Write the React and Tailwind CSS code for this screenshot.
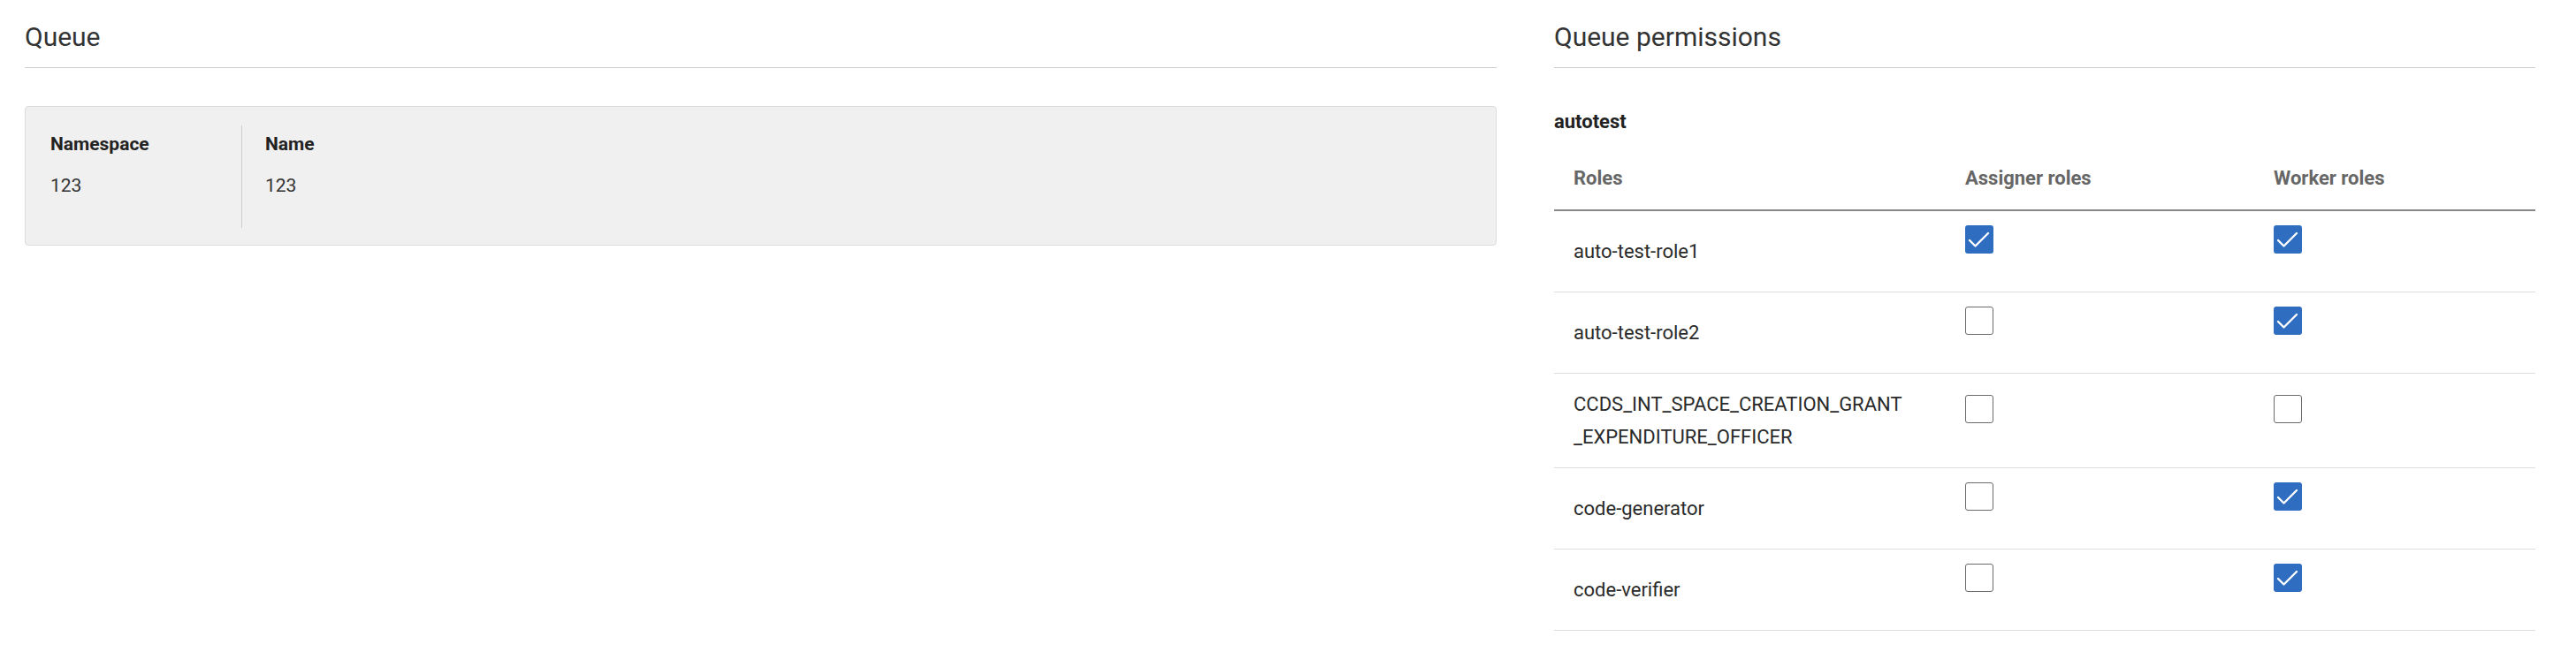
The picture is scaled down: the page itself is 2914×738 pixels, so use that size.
const roles = [
  { name: 'auto-test-role1', assigner: true, worker: true },
  { name: 'auto-test-role2', assigner: false, worker: true },
  { name: ['CCDS_INT_SPACE_CREATION_GRANT', '_EXPENDITURE_OFFICER'], assigner: false, worker: false },
  { name: 'code-generator', assigner: false, worker: true },
  { name: 'code-verifier', assigner: false, worker: true },
  { name: ['CCDS_INT_SPACE_CREATION_GRANT', '_PROJECT_MANAGER'], assigner: false, worker: false },
];

function Checkbox({ checked }) {
  if (checked) {
    return (
      <span className="block w-[32px] h-[32px] rounded-[3px] bg-[#2e6dbf]">
        <svg viewBox="0 0 32 32" className="w-full h-full">
          <polyline points="5,17 11.5,23.5 26,9" fill="none" stroke="#fff" strokeWidth="2.4" strokeLinecap="round" strokeLinejoin="round" />
        </svg>
      </span>
    );
  }
  return <span className="block w-[32px] h-[32px] rounded-[3px] border border-[#6b6b6b] bg-white" />;
}

function SectionTitle({ children }) {
  return (
    <div className="pt-[24px] pb-[16px] border-b border-[#cfcfcf]">
      <h2 className="text-[30px] leading-[36px] font-normal text-[#333]">{children}</h2>
    </div>
  );
}

export default function App() {
  return (
    <div className="flex pl-[28px] bg-white min-h-[738px] font-['Roboto',sans-serif] text-[#222]">
      <section className="w-[1665px]">
        <SectionTitle>Queue</SectionTitle>
        <div className="mt-[43px] h-[158px] rounded-[4px] border border-[#dcdcdc] bg-[#f0f0f0] pt-[21px] pb-[19px]">
          <div className="flex h-full">
            <div className="w-[245px] pl-[28px] pt-[9px] border-r border-[#cccccc]">
              <div className="text-[21px] leading-[24px] font-bold">Namespace</div>
              <div className="mt-[23px] text-[21px] leading-[24px] text-[#333]">123</div>
            </div>
            <div className="pl-[26px] pt-[9px]">
              <div className="text-[21px] leading-[24px] font-bold">Name</div>
              <div className="mt-[23px] text-[21px] leading-[24px] text-[#333]">123</div>
            </div>
          </div>
        </div>
      </section>

      <section className="ml-[65px] w-[1110px]">
        <SectionTitle>Queue permissions</SectionTitle>
        <h3 className="mt-[48px] text-[22px] leading-[26px] font-bold">autotest</h3>
        <div className="mt-[22px]">
          <div className="flex border-b-2 border-[#888] text-[22px] leading-[26px] font-bold text-[#666]">
            <div className="w-[443px] px-[22px] pt-[16px] pb-[22px]">Roles</div>
            <div className="w-[349px] px-[22px] pt-[16px] pb-[22px]">Assigner roles</div>
            <div className="flex-1 px-[22px] pt-[16px] pb-[22px]">Worker roles</div>
          </div>
          {roles.map((r, i) => (
            <div key={i} className="flex items-center py-[16px] border-b border-[#dddddd] text-[22px] leading-[37px] text-[#2a2a2a]">
              <div className="w-[443px] px-[22px]">
                {Array.isArray(r.name) ? (
                  <>
                    {r.name[0]}
                    <br />
                    {r.name[1]}
                  </>
                ) : (
                  r.name
                )}
              </div>
              <div className="w-[349px] px-[22px] h-[59px]">
                <Checkbox checked={r.assigner} />
              </div>
              <div className="flex-1 px-[22px] h-[59px]">
                <Checkbox checked={r.worker} />
              </div>
            </div>
          ))}
        </div>
      </section>
    </div>
  );
}
